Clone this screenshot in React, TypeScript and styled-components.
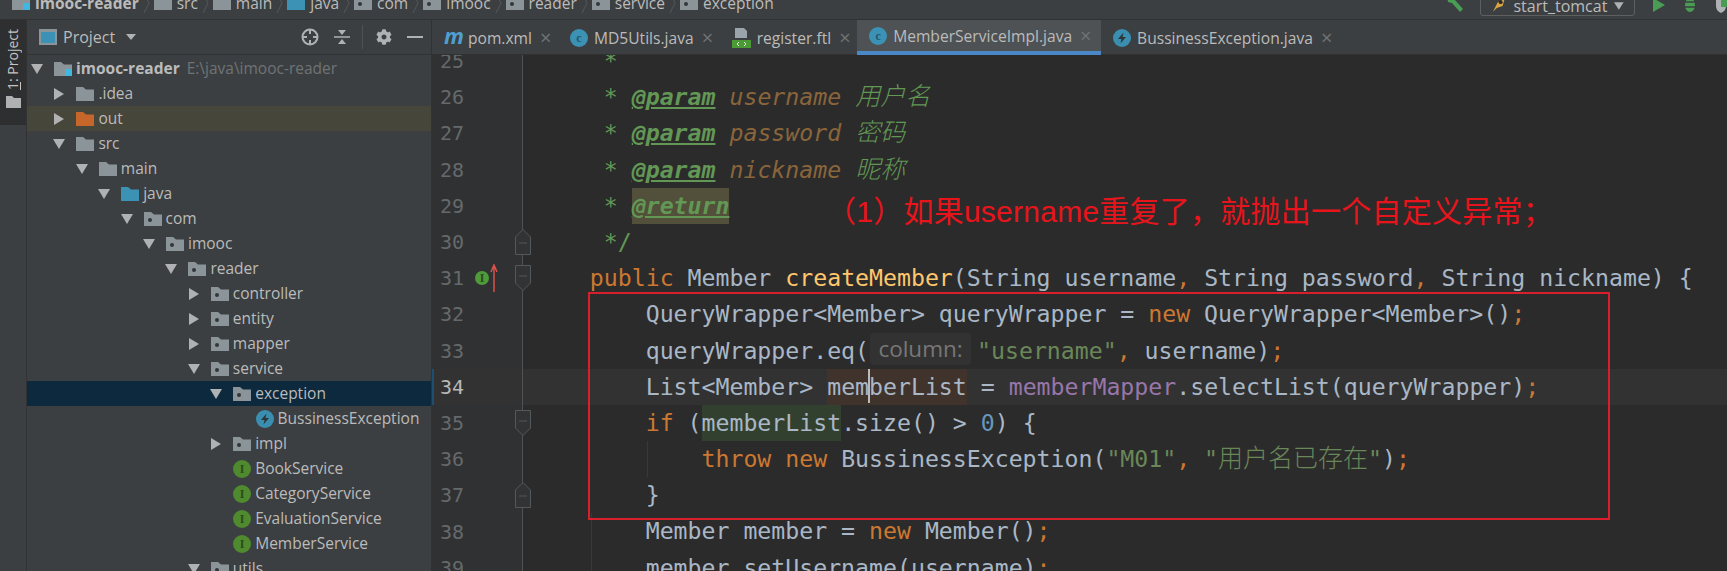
import React from 'react';
import styled, { createGlobalStyle } from 'styled-components';
import { FaCog } from 'react-icons/fa';

const UI_FONT = '"Open Sans", "Noto Sans", sans-serif';
const CODE_FONT = '"DejaVu Sans Mono", "Noto Sans CJK SC", monospace';

const TOKEN_COLORS: Record<string, string> = {
  plain: '#a9b7c6',
  keyword: '#cc7832',
  method: '#ffc66d',
  field: '#9876aa',
  string: '#6a8759',
  number: '#6897bb',
  doc: '#629755',
  param: '#8a653b',
};

const FOLDER_COLORS: Record<string, string> = {
  grey: '#8b9499',
  blue: '#3b92b5',
  orange: '#c6662b',
};

type TreeItem = {
  depth: number;
  label: string;
  arrow?: 'open' | 'closed';
  icon: 'module' | 'folder' | 'blue' | 'orange' | 'package' | 'exception' | 'interface';
  hint?: string;
  state?: 'selected' | 'excluded';
};

const TREE: TreeItem[] = [
  { depth: 0, label: 'imooc-reader', arrow: 'open', icon: 'module', hint: 'E:\\java\\imooc-reader' },
  { depth: 1, label: '.idea', arrow: 'closed', icon: 'folder' },
  { depth: 1, label: 'out', arrow: 'closed', icon: 'orange', state: 'excluded' },
  { depth: 1, label: 'src', arrow: 'open', icon: 'folder' },
  { depth: 2, label: 'main', arrow: 'open', icon: 'folder' },
  { depth: 3, label: 'java', arrow: 'open', icon: 'blue' },
  { depth: 4, label: 'com', arrow: 'open', icon: 'package' },
  { depth: 5, label: 'imooc', arrow: 'open', icon: 'package' },
  { depth: 6, label: 'reader', arrow: 'open', icon: 'package' },
  { depth: 7, label: 'controller', arrow: 'closed', icon: 'package' },
  { depth: 7, label: 'entity', arrow: 'closed', icon: 'package' },
  { depth: 7, label: 'mapper', arrow: 'closed', icon: 'package' },
  { depth: 7, label: 'service', arrow: 'open', icon: 'package' },
  { depth: 8, label: 'exception', arrow: 'open', icon: 'package', state: 'selected' },
  { depth: 9, label: 'BussinessException', icon: 'exception' },
  { depth: 8, label: 'impl', arrow: 'closed', icon: 'package' },
  { depth: 8, label: 'BookService', icon: 'interface' },
  { depth: 8, label: 'CategoryService', icon: 'interface' },
  { depth: 8, label: 'EvaluationService', icon: 'interface' },
  { depth: 8, label: 'MemberService', icon: 'interface' },
  { depth: 7, label: 'utils', arrow: 'open', icon: 'package' },
];

const CRUMBS = [
  { label: 'imooc-reader', tone: 'grey', bold: true, module: true },
  { label: 'src', tone: 'grey' },
  { label: 'main', tone: 'grey' },
  { label: 'java', tone: 'blue' },
  { label: 'com', tone: 'grey', dot: true },
  { label: 'imooc', tone: 'grey', dot: true },
  { label: 'reader', tone: 'grey', dot: true },
  { label: 'service', tone: 'grey', dot: true },
  { label: 'exception', tone: 'grey', dot: true },
];

const Folder: React.FC<{ tone?: string; dot?: boolean; module?: boolean }> = ({ tone = 'grey', dot, module }) => (
  <FolderSvg viewBox="0 0 18 14" width="18" height="14">
    <path d="M0 0h7l3 2.5h8V14H0z" fill={FOLDER_COLORS[tone]} />
    {dot && <circle cx="6" cy="8" r="2" fill="#33373a" />}
    {module && <rect x="11" y="7" width="7" height="7" fill="#40b6e0" />}
  </FolderSvg>
);

const Bolt: React.FC = () => (
  <svg viewBox="0 0 18 18" width="18" height="18">
    <circle cx="9" cy="9" r="9" fill="#3a8fb0" />
    <path d="M10.5 3.5 5 10h3.5l-1 4.5L13 8H9.5z" fill="#2f3638" />
  </svg>
);

const TreeIcon: React.FC<{ icon: TreeItem['icon'] }> = ({ icon }) => {
  if (icon === 'module') return <Folder module />;
  if (icon === 'folder') return <Folder />;
  if (icon === 'blue') return <Folder tone="blue" />;
  if (icon === 'orange') return <Folder tone="orange" />;
  if (icon === 'package') return <Folder dot />;
  if (icon === 'exception') return <Bolt />;
  return <RoundBadge $bg="#4f8a2f" $fg="#2c4a1c">I</RoundBadge>;
};

const Arrow: React.FC<{ dir?: 'open' | 'closed' }> = ({ dir }) => (
  <ArrowBox>
    {dir === 'open' && (
      <svg viewBox="0 0 12 10" width="12" height="10">
        <path d="M0 0h12L6 10z" fill="#afb1b3" />
      </svg>
    )}
    {dir === 'closed' && (
      <svg viewBox="0 0 10 12" width="10" height="12">
        <path d="M0 0v12l10-6z" fill="#afb1b3" />
      </svg>
    )}
  </ArrowBox>
);

const Chevron: React.FC = () => (
  <ChevronSvg viewBox="0 0 7 20" width="7" height="20">
    <path d="M1 0l5 10-5 10" fill="none" stroke="#55585a" strokeWidth="1" />
  </ChevronSvg>
);

const FoldMark: React.FC<{ dir: 'up' | 'down' }> = ({ dir }) => (
  <FoldSvg viewBox="0 0 16 26" width="16" height="26">
    <path
      d={dir === 'up' ? 'M.5 25.5V8L8 .5 15.5 8v17.5z' : 'M.5 .5h15V18L8 25.5.5 18z'}
      fill="#313335"
      stroke="#55585a"
    />
    <path d={dir === 'up' ? 'M4 14h8' : 'M4 11h8'} stroke="#55585a" />
  </FoldSvg>
);

const T: React.FC<{ k?: string; children: React.ReactNode }> = ({ k = 'plain', children }) => (
  <Token $color={TOKEN_COLORS[k]}>{children}</Token>
);

const DocLine: React.FC<{ name: string; text: string }> = ({ name, text }) => (
  <>
    <T k="doc">{'     * '}</T>
    <DocTag>@param</DocTag>
    <DocName> {name} </DocName>
    <Cjk $color={TOKEN_COLORS.doc} $italic>{text}</Cjk>
  </>
);

type CodeRow = {
  num: number;
  body: React.ReactNode;
  fold?: 'up' | 'down';
  current?: boolean;
  marker?: boolean;
  guide?: number;
};

const App: React.FC = () => (
  <Page>
    <GlobalStyle />
    <TopBar>
      <Crumbs>
        {CRUMBS.map((c, i) => (
          <React.Fragment key={c.label}>
            {i > 0 && <Chevron />}
            <Crumb $bold={c.bold}>
              <Folder tone={c.tone} dot={c.dot} module={c.module} />
              {c.label}
            </Crumb>
          </React.Fragment>
        ))}
      </Crumbs>
      <RunTools>
        <svg viewBox="0 0 18 16" width="18" height="16">
          <path d="M1 0l5 0 3 4 8 9-3 3-8-9-4-1z" fill="#499c54" />
        </svg>
        <RunConfig>
          <svg viewBox="0 0 16 14" width="16" height="14">
            <path d="M2 13 7 3l7-3-2 7-6 2z" fill="#d9a441" />
            <circle cx="10" cy="3" r="2" fill="#2b2b2b" />
          </svg>
          <RunName>start_tomcat</RunName>
          <svg viewBox="0 0 10 8" width="10" height="8">
            <path d="M0 0h10L5 8z" fill="#afb1b3" />
          </svg>
        </RunConfig>
        <RunButtons>
          <svg viewBox="0 0 12 14" width="12" height="14">
            <path d="M0 0v14l12-7z" fill="#499c54" />
          </svg>
          <svg viewBox="0 0 16 16" width="16" height="16">
            <ellipse cx="8" cy="8" rx="5" ry="7" fill="#499c54" />
            <path d="M0 5h16M0 10h16" stroke="#3c3f41" strokeWidth="1.5" />
          </svg>
          <svg viewBox="0 0 12 16" width="12" height="16">
            <path d="M1 0h10v9q0 5-5 7-5-2-5-7z" fill="#afb1b3" />
            <rect x="6" y="0" width="6" height="10" fill="#499c54" />
          </svg>
        </RunButtons>
      </RunTools>
    </TopBar>
    <Main>
      <ToolStripe>
        <StripeTab>
          <StripeLabel>
            <u>1</u>: Project
          </StripeLabel>
          <svg viewBox="0 0 15 12" width="15" height="12">
            <path d="M0 0h6l2 2h7v10H0z" fill="#afb1b3" />
          </svg>
        </StripeTab>
      </ToolStripe>
      <ProjectPanel>
        <PanelHeader>
          <ProjectBadge />
          <PanelTitle>Project</PanelTitle>
          <svg viewBox="0 0 10 6" width="10" height="6">
            <path d="M0 0h10L5 6z" fill="#afb1b3" />
          </svg>
          <PanelActions>
            <svg viewBox="0 0 18 18" width="18" height="18">
              <circle cx="9" cy="9" r="7.5" fill="none" stroke="#afb1b3" strokeWidth="2" />
              <path d="M9 1v5M9 12v5M1 9h5M12 9h5" stroke="#afb1b3" strokeWidth="2" />
            </svg>
            <svg viewBox="0 0 16 16" width="16" height="16">
              <path d="M0 8h16" stroke="#afb1b3" strokeWidth="1.5" />
              <path d="M4 1h8L8 6zM4 15h8l-4-5z" fill="#afb1b3" />
            </svg>
            <ActionDivider />
            <GearIcon />
            <svg viewBox="0 0 16 2" width="16" height="2">
              <rect width="16" height="2" fill="#afb1b3" />
            </svg>
          </PanelActions>
        </PanelHeader>
        <Tree>
          {TREE.map((item) => (
            <TreeRow key={item.label} $depth={item.depth} $state={item.state}>
              <Arrow dir={item.arrow} />
              <TreeIcon icon={item.icon} />
              <TreeLabel $bold={item.depth === 0}>{item.label}</TreeLabel>
              {item.hint && <TreeHint>{item.hint}</TreeHint>}
            </TreeRow>
          ))}
        </Tree>
      </ProjectPanel>
      <Editor>
        <TabBar>
          <Tab>
            <MavenIcon>m</MavenIcon>
            <TabName>pom.xml</TabName>
            <TabClose>×</TabClose>
          </Tab>
          <Tab>
            <RoundBadge $bg="#3b92b5" $fg="#24566b">c</RoundBadge>
            <TabName>MD5Utils.java</TabName>
            <TabClose>×</TabClose>
          </Tab>
          <Tab>
            <svg viewBox="0 0 19 20" width="19" height="20">
              <path d="M3 0h9l3 3v7H3z" fill="#9aa4aa" />
              <rect y="12" width="19" height="8" fill="#4b9a35" />
              <path d="M7 14l-2 2 2 2M12 14l2 2-2 2" stroke="#dfe8da" fill="none" />
            </svg>
            <TabName>register.ftl</TabName>
            <TabClose>×</TabClose>
          </Tab>
          <Tab $active>
            <RoundBadge $bg="#3b92b5" $fg="#24566b">c</RoundBadge>
            <TabName>MemberServiceImpl.java</TabName>
            <TabClose>×</TabClose>
          </Tab>
          <Tab>
            <Bolt />
            <TabName>BussinessException.java</TabName>
            <TabClose>×</TabClose>
          </Tab>
        </TabBar>
        <CodeViewport>
          <CodeScroll>
            {ROWS.map((row) => (
              <Row key={row.num} $current={row.current}>
                <Gutter $current={row.current}>
                  <LineNumber $current={row.current}>{row.num}</LineNumber>
                  {row.marker && (
                    <OverrideMark>
                      <RoundBadge $bg="#4f9a3a" $fg="#2c4a1c" $size={14}>I</RoundBadge>
                      <svg viewBox="0 0 8 28" width="8" height="28">
                        <path d="M4 28V3M1 8l3-7 3 7" fill="none" stroke="#d8534a" strokeWidth="1.5" />
                      </svg>
                    </OverrideMark>
                  )}
                  {row.fold && <FoldMark dir={row.fold} />}
                </Gutter>
                <CodeText $guide={row.guide}>{row.body}</CodeText>
              </Row>
            ))}
          </CodeScroll>
          <Annotation>（1）如果username重复了，就抛出一个自定义异常；</Annotation>
          <RedBox />
        </CodeViewport>
      </Editor>
    </Main>
  </Page>
);

const GlobalStyle = createGlobalStyle`
  html, body {
    margin: 0;
    padding: 0;
    background: #3c3f41;
  }
`;

const Page = styled.div`
  width: 1727px;
  height: 571px;
  overflow: hidden;
  display: flex;
  flex-direction: column;
  background: #3c3f41;
  color: #bbbbbb;
  font-family: ${UI_FONT};
`;

const TopBar = styled.div`
  height: 20px;
  flex: none;
  box-sizing: border-box;
  border-bottom: 1px solid #323232;
  display: flex;
  overflow: hidden;
`;

const Crumbs = styled.div`
  display: flex;
  align-items: center;
  height: 20px;
  margin-top: -7px;
  padding-left: 12px;
  font-size: 15.5px;
  gap: 4px;
  flex: 1;
`;

const Crumb = styled.div<{ $bold?: boolean }>`
  display: flex;
  align-items: center;
  gap: 5px;
  font-weight: ${({ $bold }) => ($bold ? 700 : 400)};
  white-space: nowrap;
`;

const FolderSvg = styled.svg`
  flex: none;
`;

const ChevronSvg = styled.svg`
  flex: none;
`;

const RunTools = styled.div`
  display: flex;
  align-items: flex-start;
  margin-top: -4px;
`;

const RunConfig = styled.div`
  display: flex;
  align-items: center;
  gap: 7px;
  width: 155px;
  height: 20px;
  box-sizing: border-box;
  margin-left: 16px;
  padding: 0 10px;
  border: 1px solid #5e6060;
  border-radius: 3px;
  font-size: 16px;
`;

const RunName = styled.span`
  width: 97px;
  white-space: nowrap;
`;

const RunButtons = styled.div`
  display: flex;
  align-items: center;
  gap: 17px;
  margin-left: 18px;
  margin-top: 1px;
`;

const Main = styled.div`
  flex: 1;
  display: flex;
  min-height: 0;
`;

const ToolStripe = styled.div`
  width: 27px;
  flex: none;
  box-sizing: border-box;
  border-right: 1px solid #323232;
`;

const StripeTab = styled.div`
  height: 105px;
  background: #2d2f30;
  display: flex;
  flex-direction: column;
  align-items: center;
  gap: 6px;
  padding-top: 9px;
  box-sizing: border-box;
`;

const StripeLabel = styled.span`
  writing-mode: vertical-rl;
  transform: rotate(180deg);
  font-size: 14px;
  line-height: 16px;
  color: #c4c4c4;
  white-space: nowrap;
`;

const ProjectPanel = styled.div`
  width: 404px;
  flex: none;
  display: flex;
  flex-direction: column;
`;

const PanelHeader = styled.div`
  height: 35px;
  flex: none;
  box-sizing: border-box;
  border-bottom: 1px solid #323232;
  display: flex;
  align-items: center;
  padding: 0 8px 0 12px;
`;

const ProjectBadge = styled.div`
  width: 18px;
  height: 16px;
  box-sizing: border-box;
  border: 2px solid #8b9499;
  border-top-width: 3px;
  background: #3b92b5;
`;

const PanelTitle = styled.span`
  margin: 0 11px 0 6px;
  font-size: 16px;
  color: #bbbbbb;
`;

const PanelActions = styled.div`
  margin-left: auto;
  display: flex;
  align-items: center;
  gap: 15px;
`;

const ActionDivider = styled.div`
  width: 1px;
  height: 24px;
  background: #4f5254;
  margin-left: -3px;
`;

const GearIcon = styled(FaCog)`
  width: 16px;
  height: 16px;
  color: #afb1b3;
  margin-left: -2px;
`;

const Tree = styled.div`
  flex: 1;
  padding-top: 1px;
  overflow: hidden;
`;

const TreeRow = styled.div<{ $depth: number; $state?: string }>`
  height: 25px;
  display: flex;
  align-items: center;
  padding-left: ${({ $depth }) => 3 + $depth * 22.4}px;
  background: ${({ $state }) =>
    $state === 'selected' ? '#0d293e' : $state === 'excluded' ? '#47463a' : 'transparent'};
  font-size: 15.5px;
  white-space: nowrap;
`;

const ArrowBox = styled.div`
  width: 14px;
  margin-right: 10px;
  flex: none;
  display: flex;
  align-items: center;
  justify-content: center;
`;

const TreeLabel = styled.span<{ $bold?: boolean }>`
  margin-left: 4px;
  padding-bottom: 2px;
  font-weight: ${({ $bold }) => ($bold ? 700 : 400)};
`;

const TreeHint = styled.span`
  margin-left: 7px;
  padding-bottom: 2px;
  color: #6f7375;
`;

const RoundBadge = styled.span<{ $bg: string; $fg: string; $size?: number }>`
  width: ${({ $size }) => $size ?? 18}px;
  height: ${({ $size }) => $size ?? 18}px;
  flex: none;
  border-radius: 50%;
  background: ${({ $bg }) => $bg};
  color: ${({ $fg }) => $fg};
  display: inline-flex;
  align-items: center;
  justify-content: center;
  font-family: "Liberation Serif", serif;
  font-size: 12px;
  font-weight: 700;
  line-height: 1;
`;

const Editor = styled.div`
  flex: 1;
  min-width: 0;
  display: flex;
  flex-direction: column;
  border-left: 1px solid #323232;
`;

const TabBar = styled.div`
  height: 35px;
  flex: none;
  box-sizing: border-box;
  border-bottom: 1px solid #323232;
  display: flex;
`;

const Tab = styled.div<{ $active?: boolean }>`
  height: 35px;
  box-sizing: border-box;
  display: flex;
  align-items: center;
  padding: 0 ${({ $active }) => ($active ? 11 : 8)}px 0 12px;
  background: ${({ $active }) => ($active ? '#4e5254' : 'transparent')};
  border-bottom: ${({ $active }) => ($active ? '4px solid #4a88c7' : 'none')};
  font-size: 15.6px;
`;

const TabName = styled.span`
  margin-left: 6px;
  white-space: nowrap;
`;

const TabClose = styled.span`
  width: 10px;
  margin-left: 8px;
  text-align: center;
  font-size: 20px;
  color: #6f7375;
`;

const MavenIcon = styled.span`
  width: 18px;
  font-size: 22px;
  line-height: 1;
  margin-top: -6px;
  font-weight: 700;
  font-style: italic;
  color: #4f9fd0;
`;

const CodeViewport = styled.div`
  flex: 1;
  min-height: 0;
  position: relative;
  overflow: hidden;
  background: #2b2b2b;
`;

const CodeScroll = styled.div`
  margin-top: -12px;
`;

const Row = styled.div<{ $current?: boolean }>`
  height: 36.2px;
  display: flex;
  background: ${({ $current }) => ($current ? '#323232' : 'transparent')};
`;

const Gutter = styled.div<{ $current?: boolean }>`
  width: 91px;
  flex: none;
  position: relative;
  box-sizing: border-box;
  background: ${({ $current }) => ($current ? '#323232' : '#2f3133')};
  border-right: 1px solid #505254;
  box-shadow: ${({ $current }) => ($current ? 'inset 2px 0 #1d4f70' : 'none')};
  padding-left: 8px;
  display: flex;
  align-items: center;
`;

const LineNumber = styled.span<{ $current?: boolean }>`
  font-family: ${CODE_FONT};
  font-size: 20px;
  color: ${({ $current }) => ($current ? '#b8b8b8' : '#66696b')};
`;

const OverrideMark = styled.span`
  position: absolute;
  left: 43px;
  top: 4px;
  display: flex;
  align-items: center;
  gap: 1px;
`;

const FoldSvg = styled.svg`
  position: absolute;
  right: -9px;
  top: 5px;
`;

const CodeText = styled.div<{ $guide?: number }>`
  flex: 1;
  padding-left: 11px;
  font-family: ${CODE_FONT};
  font-size: 23.2px;
  line-height: 36.2px;
  white-space: pre;
  background-image: ${({ $guide }) => ($guide ? 'linear-gradient(#383838, #383838)' : 'none')};
  background-repeat: no-repeat;
  background-size: 1px 100%;
  background-position-x: ${({ $guide }) => 12 + ($guide ?? 0) * 13.95}px;
`;

const Token = styled.span<{ $color: string }>`
  color: ${({ $color }) => $color};
`;

const Cjk = styled.span<{ $color: string; $italic?: boolean }>`
  color: ${({ $color }) => $color};
  font-family: "Noto Sans CJK SC", sans-serif;
  font-size: 25px;
  font-weight: 300;
  line-height: 0;
  font-style: ${({ $italic }) => ($italic ? 'italic' : 'normal')};
`;

const DocTag = styled.span`
  color: #629755;
  font-weight: 700;
  font-style: italic;
  text-decoration: underline;
`;

const DocName = styled.span`
  color: #8a653b;
  font-style: italic;
`;

const Mark = styled.span<{ $bg: string }>`
  display: inline-block;
  background: ${({ $bg }) => $bg};
  height: 36px;
`;

const Caret = styled.span`
  display: inline-block;
  width: 0;
  height: 34px;
  margin: 0 -1px;
  border-left: 2px solid #bbbbbb;
  vertical-align: top;
`;

const InlayHint = styled.span`
  display: inline-block;
  width: 101px;
  height: 32px;
  margin: 0 6px 0 1px;
  border-radius: 3px;
  background: #323232;
  color: #787878;
  font-family: ${UI_FONT};
  font-size: 22.5px;
  line-height: 32px;
  text-align: center;
  vertical-align: top;
`;

const Annotation = styled.div`
  position: absolute;
  left: 394px;
  top: 137px;
  font-family: "Liberation Sans", "Noto Sans CJK SC", sans-serif;
  font-size: 30px;
  letter-spacing: 0.25px;
  line-height: 40px;
  color: #e8141c;
  white-space: nowrap;
`;

const RedBox = styled.div`
  position: absolute;
  left: 156px;
  top: 237px;
  width: 1022px;
  height: 228px;
  box-sizing: border-box;
  border: 2.5px solid #d91f2b;
`;

const ROWS: CodeRow[] = [
  { num: 25, body: <T k="doc">{'     *'}</T> },
  { num: 26, body: <DocLine name="username" text="用户名" /> },
  { num: 27, body: <DocLine name="password" text="密码" /> },
  { num: 28, body: <DocLine name="nickname" text="昵称" /> },
  {
    num: 29,
    body: (
      <>
        <T k="doc">{'     * '}</T>
        <Mark $bg="#52503a"><DocTag>@return</DocTag></Mark>
      </>
    ),
  },
  { num: 30, fold: 'up', body: <T k="doc">{'     */'}</T> },
  {
    num: 31,
    fold: 'down',
    marker: true,
    body: (
      <>
        <T k="keyword">{'    public '}</T>
        <T>Member </T>
        <T k="method">createMember</T>
        <T>(String username</T>
        <T k="keyword">, </T>
        <T>String password</T>
        <T k="keyword">, </T>
        <T>String nickname) {'{'}</T>
      </>
    ),
  },
  {
    num: 32,
    body: (
      <>
        <T>{'        QueryWrapper<Member> queryWrapper = '}</T>
        <T k="keyword">new </T>
        <T>{'QueryWrapper<Member>()'}</T>
        <T k="keyword">;</T>
      </>
    ),
  },
  {
    num: 33,
    body: (
      <>
        <T>{'        queryWrapper.eq('}</T>
        <InlayHint>column:</InlayHint>
        <T k="string">"username"</T>
        <T k="keyword">, </T>
        <T>username)</T>
        <T k="keyword">;</T>
      </>
    ),
  },
  {
    num: 34,
    current: true,
    body: (
      <>
        <T>{'        List<Member> '}</T>
        <Mark $bg="#40332b">
          <T>mem</T>
          <Caret />
          <T>berList</T>
        </Mark>
        <T> = </T>
        <T k="field">memberMapper</T>
        <T>.selectList(queryWrapper)</T>
        <T k="keyword">;</T>
      </>
    ),
  },
  {
    num: 35,
    fold: 'down',
    body: (
      <>
        <T k="keyword">{'        if '}</T>
        <T>(</T>
        <Mark $bg="#32412f"><T>memberList</T></Mark>
        <T>.size() &gt; </T>
        <T k="number">0</T>
        <T>) {'{'}</T>
      </>
    ),
  },
  {
    num: 36,
    guide: 8,
    body: (
      <>
        <T k="keyword">{'            throw new '}</T>
        <T>BussinessException(</T>
        <T k="string">"M01"</T>
        <T k="keyword">, </T>
        <T k="string">"</T>
        <Cjk $color={TOKEN_COLORS.string}>用户名已存在</Cjk>
        <T k="string">"</T>
        <T>)</T>
        <T k="keyword">;</T>
      </>
    ),
  },
  { num: 37, fold: 'up', body: <T>{'        }'}</T> },
  {
    num: 38,
    guide: 4,
    body: (
      <>
        <T>{'        Member member = '}</T>
        <T k="keyword">new </T>
        <T>Member()</T>
        <T k="keyword">;</T>
      </>
    ),
  },
  {
    num: 39,
    guide: 4,
    body: (
      <>
        <T>{'        member.setUsername(username)'}</T>
        <T k="keyword">;</T>
      </>
    ),
  },
];

export default App;
